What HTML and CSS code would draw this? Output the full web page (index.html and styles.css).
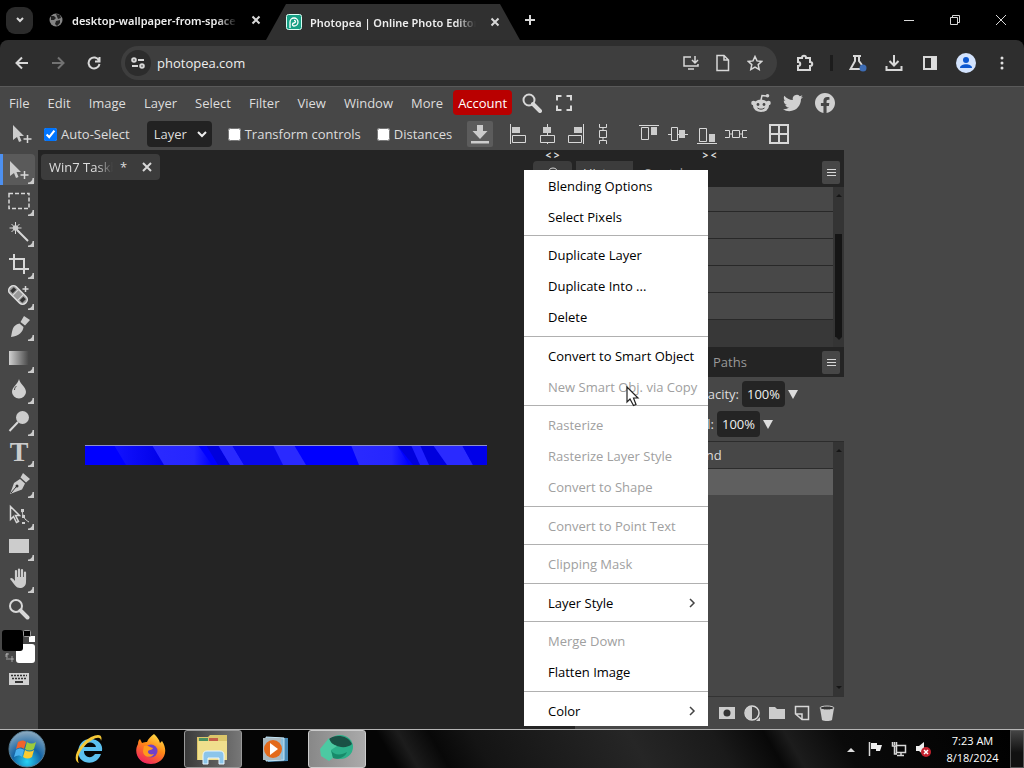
FILE: index.html
```html
<!DOCTYPE html>
<html lang="en">
<head>
<meta charset="UTF-8" />
<meta name="viewport" content="width=device-width, initial-scale=1" />
<title>Photopea | Online Photo Editor</title>
<link rel="stylesheet" href="styles.css">
</head>
<body>

<!-- Browser tabs -->
<header class="tabstrip">
  <button class="tab-search" aria-label="Search tabs"><svg width="10" height="10" viewBox="0 0 10 10"><path d="M2 3l3 3 3-3" class="line bold"/></svg></button>
  <div class="tab">
    <svg class="favicon" width="14" height="14" viewBox="0 0 14 14"><circle cx="7" cy="7" r="6.5" fill="#858585"/><path d="M2 3l3 0 2 2-2 2H2zM7 1l4 1 1 3-3 1zM7 8l4-1 0 3-3 3-2-2z" fill="#222"/></svg>
    <span class="tab-title">desktop-wallpaper-from-space</span>
    <button class="tab-close" aria-label="Close tab"><svg width="10" height="10" viewBox="0 0 10 10"><path d="M1.500 1.500l7 7M8.500 1.500l-7 7" class="line bold"/></svg></button>
  </div>
  <div class="tab active">
    <svg class="favicon" width="16" height="16" viewBox="0 0 16 16"><rect x=".5" y=".5" width="15" height="15" rx="2" fill="#16a085" stroke="#d8fff4"/><path d="M4 14V8a4 4 0 1 1 4 4c-2 0-2-3 0-3 2 0 2-3 0-2.500" fill="none" stroke="#fff" stroke-width="1.300"/></svg>
    <span class="tab-title">Photopea | Online Photo Editor</span>
    <button class="tab-close" aria-label="Close tab"><svg width="10" height="10" viewBox="0 0 10 10"><path d="M1.500 1.500l7 7M8.500 1.500l-7 7" class="line bold"/></svg></button>
  </div>
  <button class="new-tab" aria-label="New tab"><svg width="12" height="12" viewBox="0 0 12 12"><path d="M6 1v10M1 6h10" class="line bold"/></svg></button>
  <div class="window-buttons">
    <button aria-label="Minimize"><svg width="12" height="12" viewBox="0 0 12 12"><path d="M1 6.500h10" class="line"/></svg></button>
    <button aria-label="Restore"><svg width="12" height="12" viewBox="0 0 12 12"><path d="M1.500 3.500h7v7h-7zM3.500 3.500v-2h7v7h-2" class="line"/></svg></button>
    <button aria-label="Close"><svg width="12" height="12" viewBox="0 0 12 12"><path d="M1 1l10 10M11 1L1 11" class="line"/></svg></button>
  </div>
</header>

<!-- Browser toolbar -->
<div class="toolbar">
  <button aria-label="Back"><svg width="14" height="14" viewBox="0 0 14 14"><path d="M13 7H2M7 1.500L1.500 7 7 12.500" class="line bold"/></svg></button>
  <button aria-label="Forward" class="dim"><svg width="14" height="14" viewBox="0 0 14 14"><path d="M1 7h11M7 1.500L12.500 7 7 12.500" class="line bold"/></svg></button>
  <button aria-label="Reload"><svg width="14" height="14" viewBox="0 0 14 14"><path d="M12 4.500A5.500 5.500 0 1 0 12.500 8M12.500 1v4.500H8" class="line bold"/></svg></button>
  <div class="omnibox">
    <button class="site-info" aria-label="Site information"><svg width="14" height="12" viewBox="0 0 14 12"><circle cx="3" cy="3" r="1.800" class="line bold"/><circle cx="11" cy="9" r="1.800" class="line bold"/><path d="M7 3h6M1 9h6" class="line bold"/></svg></button>
    <input type="text" value="photopea.com" aria-label="Address">
    <button aria-label="Install app"><svg width="18" height="16" viewBox="0 0 18 16"><path d="M9 2H2v9h14V9M13 1v6M10 5l3 3 3-3M6 14h6" class="line thick"/></svg></button>
    <button aria-label="Page"><svg width="16" height="18" viewBox="0 0 16 18"><path d="M2 1.500h7l4.500 4.500v10.500H2zM9 1.500V6h4.500" class="line thick"/></svg></button>
    <button aria-label="Bookmark"><svg width="16" height="16" viewBox="0 0 16 16"><path d="M8 1.500l2 4.400 4.800.500-3.600 3.200 1 4.800L8 12l-4.200 2.400 1-4.800L1.200 6.400 6 5.900z" class="line thick"/></svg></button>
  </div>
  <button aria-label="Extensions"><svg width="18" height="18" viewBox="0 0 18 18"><path d="M2 4h4c0-3 4-3 4 0h4v4c3 0 3 4 0 4v4H2v-4c3 0 3-4 0-4z" class="line bold"/></svg></button>
  <span class="bar"></span>
  <button aria-label="Labs"><svg width="18" height="18" viewBox="0 0 18 18"><path d="M4 2h8M6 2v5L1.500 15H12M10 2v5l3 4" class="line bold"/><circle cx="14" cy="14" r="3.500" fill="#3d6cb4"/></svg></button>
  <button aria-label="Downloads"><svg width="18" height="18" viewBox="0 0 18 18"><path d="M9 1v10M4.500 7L9 11.500 13.500 7M1.500 12v4h15v-4" class="line bold"/></svg></button>
  <button aria-label="Side panel"><svg width="16" height="16" viewBox="0 0 16 16"><path d="M2 2h12v12H2z" class="line bold"/><path d="M9 2h5v12H9z" fill="#ddd"/></svg></button>
  <button aria-label="Profile"><svg width="20" height="20" viewBox="0 0 20 20"><circle cx="10" cy="10" r="10" fill="#d3e3fd"/><circle cx="10" cy="7" r="3" fill="#0b57d0"/><path d="M4 15c0-5 12-5 12 0z" fill="#0b57d0"/></svg></button>
  <button aria-label="Menu"><svg width="4" height="16" viewBox="0 0 4 16" fill="#e0e0e0"><circle cx="2" cy="3" r="1.500"/><circle cx="2" cy="8" r="1.500"/><circle cx="2" cy="13" r="1.500"/></svg></button>
</div>

<!-- Editor -->
<div class="app">
  <div class="editor">
    <nav class="menubar">
      <button>File</button>
      <button>Edit</button>
      <button>Image</button>
      <button>Layer</button>
      <button>Select</button>
      <button>Filter</button>
      <button>View</button>
      <button>Window</button>
      <button>More</button>
      <button class="account">Account</button>
      <button class="icon" aria-label="Search"><svg width="20" height="20" viewBox="0 0 20 20"><circle cx="7" cy="7" r="5.500" class="line bold"/><path d="M11 11l7 7" class="line heavy"/></svg></button>
      <button class="icon" aria-label="Fullscreen"><svg width="18" height="18" viewBox="0 0 18 18"><path d="M2 6.500V2h4.500M11.500 2H16v4.500M16 11.500V16h-4.500M6.500 16H2v-4.500" class="line bold"/></svg></button>
      <div class="social">
        <a href="#" aria-label="Reddit"><svg width="20" height="20" viewBox="0 0 20 20"><path d="M10 7l1-4.500 4 .5" class="line thick"/><g fill="#d0d0d0"><circle cx="16.500" cy="2.800" r="1.800"/><circle cx="2.500" cy="10" r="2.300"/><circle cx="17.500" cy="10" r="2.300"/><ellipse cx="10" cy="12.800" rx="8" ry="6.200"/></g><g fill="#474747"><circle cx="7" cy="11.500" r="1.400"/><circle cx="13" cy="11.500" r="1.400"/></g><path d="M6.500 15c2 1.600 5 1.600 7 0" fill="none" stroke="#474747"/></svg></a>
        <a href="#" aria-label="Twitter"><svg width="20" height="20" viewBox="0 0 24 24"><path fill="#d0d0d0" d="M23.950 4.570a10 10 0 0 1-2.820.770 4.960 4.960 0 0 0 2.160-2.720c-.950.550-2 .960-3.130 1.180a4.920 4.920 0 0 0-8.380 4.480C7.690 8.090 4.070 6.130 1.640 3.160a4.820 4.820 0 0 0-.670 2.480c0 1.710.870 3.210 2.190 4.100a4.900 4.900 0 0 1-2.230-.620v.060a4.920 4.920 0 0 0 3.950 4.830 5 5 0 0 1-2.210.080 4.940 4.940 0 0 0 4.600 3.420A9.870 9.870 0 0 1 0 19.540a14 14 0 0 0 7.560 2.210c9.050 0 14-7.500 14-13.980 0-.210 0-.420-.020-.630a9.940 9.940 0 0 0 2.410-2.570z"/></svg></a>
        <a href="#" aria-label="Facebook"><svg width="20" height="20" viewBox="0 0 24 24"><path fill="#d0d0d0" d="M24 12.070C24 5.450 18.630.070 12 .070S0 5.450 0 12.070c0 5.990 4.390 10.950 10.130 11.850v-8.380H7.080v-3.470h3.050V9.430c0-3.010 1.790-4.670 4.530-4.670 1.310 0 2.690.240 2.690.240v2.950h-1.510c-1.490 0-1.960.930-1.960 1.880v2.250h3.330l-.530 3.470h-2.800v8.380C19.610 23.030 24 18.060 24 12.070z"/></svg></a>
      </div>
    </nav>

    <div class="options">
      <svg class="current-tool" width="22" height="22" viewBox="0 0 22 22"><path d="M2 2v15l4-3 2 5 2.500-1-2-5H13z" fill="#ccc"/><path d="M16.500 12v8M12.500 16h8" class="line thick"/></svg>
      <label class="check"><input type="checkbox" checked>Auto-Select</label>
      <select aria-label="Auto-select target"><option>Layer</option><option>Group</option></select>
      <label class="check transform"><input type="checkbox">Transform controls</label>
      <label class="check"><input type="checkbox">Distances</label>
      <button class="download" aria-label="Export"><svg width="20" height="20" viewBox="0 0 20 20"><path d="M7 1h6v6h4.500L10 15 2.500 7H7zM1 17h18v2.500H1z" fill="#ccc"/></svg></button>
      <div class="align">
        <button aria-label="Align left"><svg width="20" height="20" viewBox="0 0 20 20"><path d="M2.500 0v20M4.500 11.500h13v7h-13z" class="line"/><path d="M4 3h8v6H4z" fill="#ccc"/></svg></button>
        <button aria-label="Align center"><svg width="20" height="20" viewBox="0 0 20 20"><path d="M10.500 0v3M10.500 9v2M10.500 18v2M3.500 11.500h14v7h-14z" class="line"/><path d="M6 3h8v6H6z" fill="#ccc"/></svg></button>
        <button aria-label="Align right"><svg width="20" height="20" viewBox="0 0 20 20"><path d="M17.500 0v20M2.500 11.500h13v7h-13z" class="line"/><path d="M8 3h8v6H8z" fill="#ccc"/></svg></button>
        <button aria-label="Distribute vertically" class="narrow"><svg width="12" height="20" viewBox="0 0 12 20"><path d="M2.500 0v3.500h7V0M2.500 6.500h7v7h-7zM2.500 20v-3.500h7V20M6 3v3M6 14v2" class="line"/></svg></button>
      </div>
      <div class="align">
        <button aria-label="Align top"><svg width="20" height="20" viewBox="0 0 20 20"><path d="M0 1.500h20M2.500 3.500h7v12h-7z" class="line"/><path d="M12 3h6v8h-6z" fill="#ccc"/></svg></button>
        <button aria-label="Align middle"><svg width="20" height="20" viewBox="0 0 20 20"><path d="M0 10.500h3M9 10.500h2M17 10.500h3M3.500 3.500h6v13h-6z" class="line"/><path d="M11 6h6v8h-6z" fill="#ccc"/></svg></button>
        <button aria-label="Align bottom"><svg width="20" height="20" viewBox="0 0 20 20"><path d="M0 19.500h20M2.500 4.500h7v13h-7z" class="line"/><path d="M12 10h6v8h-6z" fill="#ccc"/></svg></button>
        <button aria-label="Distribute horizontally"><svg width="22" height="12" viewBox="0 0 22 12"><path d="M0 2.500h4.500v7H0M7.500 2.500h7v7h-7zM22 2.500h-4.500v7H22M5 6h2M15 6h2" class="line"/></svg></button>
      </div>
      <button class="grid-button" aria-label="Grid"><svg width="20" height="20" viewBox="0 0 20 20"><path d="M1 1h18v18H1zM10 1v18M1 10h18" class="line bold"/></svg></button>
    </div>

    <div class="workspace">
      <aside class="toolbox">
        <div class="tools">
          <button class="tool more active" aria-label="Move"><svg width="22" height="22" viewBox="0 0 22 22"><path d="M2 2v15l4-3 2 5 2.500-1-2-5H13z" fill="#ccc"/><path d="M16.500 12v8M12.500 16h8" class="line thick"/></svg></button>
          <button class="tool more" aria-label="Rectangle select"><svg width="22" height="22" viewBox="0 0 22 22"><path d="M1 3.500h20v15H1z" class="line thick" stroke-dasharray="4 2"/></svg></button>
          <button class="tool more" aria-label="Magic wand"><svg width="22" height="22" viewBox="0 0 22 22"><path d="M7.500 1v12M1.500 7h12M3.500 3l8 8M11.500 3l-8 8" class="line"/><circle cx="7.500" cy="7" r="2.800" fill="#ccc"/><path d="M9 9l11 11" class="line bold"/></svg></button>
          <button class="tool more" aria-label="Crop"><svg width="22" height="22" viewBox="0 0 22 22"><path d="M6 1v15h15M1 6h15v15" class="line bold"/></svg></button>
          <button class="tool more" aria-label="Healing brush"><svg width="22" height="22" viewBox="0 0 22 22"><g transform="rotate(45 10 11)"><rect x="-1" y="6.500" width="22" height="9" rx="4" fill="#999" stroke="#ddd" stroke-width="1.500"/><path d="M6.500 6v10M13.500 6v10" stroke="#ddd"/><rect x="1.500" y="8.500" width="3.500" height="5" fill="#333"/><rect x="15" y="8.500" width="3.500" height="5" fill="#333"/></g><path d="M17.500 2v6M14.500 5h6" class="line thick"/></svg></button>
          <button class="tool more" aria-label="Brush"><svg width="22" height="22" viewBox="0 0 22 22"><path d="M16 0l6 4-5 5.500-4.500-3.500zM11.500 7.500l4 3.500C15 16 11 20 3 21c1.500-6 1-12 8.500-13.500z" fill="#ccc"/></svg></button>
          <button class="tool more" aria-label="Gradient"><svg width="22" height="22" viewBox="0 0 22 22"><defs><linearGradient id="fade"><stop offset="0" stop-color="#d0d0d0"/><stop offset="1" stop-color="#454545"/></linearGradient></defs><path d="M1 4h20v14H1z" fill="url(#fade)"/></svg></button>
          <button class="tool more" aria-label="Blur"><svg width="22" height="22" viewBox="0 0 22 22"><path d="M11 1c1 5 7 8 7 13a7 6.500 0 0 1-14 0C4 9 10 6 11 1z" fill="#d0d0d0"/><path d="M6.500 12c0-2 1-3 2-4" fill="none" stroke="#444"/></svg></button>
          <button class="tool more" aria-label="Dodge"><svg width="22" height="22" viewBox="0 0 22 22"><circle cx="14.500" cy="7.500" r="6.500" fill="#ccc"/><path d="M10 12l-8.500 9" class="line bold"/></svg></button>
          <button class="tool more type" aria-label="Type">T</button>
          <button class="tool more" aria-label="Pen"><svg width="22" height="22" viewBox="0 0 22 22"><path d="M15 0l7 6-4 3.500-5.500-5zM12 6l5 4.500-3 6L2 21l4-11z" fill="#ccc"/><circle cx="9" cy="13" r="1.500" fill="#333"/><path d="M3 20l5-6" stroke="#333"/></svg></button>
          <button class="tool more" aria-label="Path select"><svg width="22" height="22" viewBox="0 0 22 22"><path d="M2.500 2.500v13l3-3 3 6 2-1-3-6h4z" class="line thick"/><path d="M14 5c0 7 3 11 7 13" class="line"/><path d="M13 5h3v3h-3zM14 11h3v3h-3zM14 18h3v2h-3z" fill="#ccc"/></svg></button>
          <button class="tool more" aria-label="Rectangle"><svg width="22" height="22" viewBox="0 0 22 22"><path d="M1 4h20v14H1z" fill="#ccc"/></svg></button>
          <button class="tool more" aria-label="Hand"><svg width="22" height="22" viewBox="0 0 22 22"><path d="M8 12V4M11 11V2.500M14 11V3M17 13V5.500" stroke="#ccc" stroke-width="2.200" stroke-linecap="round"/><path d="M7 10h11v5c0 4-3 6-6 6-4 0-5-3-10-9 1-2 3-.5 5 2z" fill="#ccc"/></svg></button>
          <button class="tool" aria-label="Zoom"><svg width="22" height="22" viewBox="0 0 22 22"><circle cx="8" cy="8" r="6" class="line bold"/><path d="M12.500 12.500l7 7" class="line heavy"/></svg></button>
        </div>
        <svg class="colors" width="36" height="36" viewBox="0 0 36 36"><rect x="16" y="15" width="19" height="19" rx="3" fill="#fff"/><rect x="2" y="1" width="21" height="21" rx="3" fill="#000"/><rect x="29" y="7" width="6" height="6" fill="#fff"/><rect x="23.500" y="1.500" width="7" height="6" rx="1" fill="#000" stroke="#999"/><path d="M6 28v-3h3M7 24v7M8 30h6M12 27v6" class="line" opacity=".6"/></svg>
        <button class="keyboard" aria-label="Keyboard"><svg width="20" height="12" viewBox="0 0 20 12"><path d="M0 0h20v12H0z" fill="#d0d0d0"/><path d="M2 2.500h16M3 5.500h15" stroke="#333" stroke-width="1.500" stroke-dasharray="2 1"/><path d="M6 9h8" stroke="#333" stroke-width="2"/></svg></button>
      </aside>

      <main class="document">
        <div class="doc-tabs">
          <div class="doc-tab">
            <span class="doc-name">Win7 Taskbar</span>
            <span class="dirty">*</span>
            <button aria-label="Close document"><svg width="10" height="10" viewBox="0 0 10 10"><path d="M1 1l8 8M9 1L1 9" class="line bold"/></svg></button>
          </div>
        </div>
        <div class="canvas">
          <svg width="402" height="20" viewBox="0 0 402 20">
            <defs>
              <linearGradient id="g1"><stop offset="0" stop-color="#2a2aff"/><stop offset=".7" stop-color="#2626ff"/><stop offset="1" stop-color="#00f"/></linearGradient>
              <linearGradient id="g2"><stop offset="0" stop-color="#1212ff"/><stop offset="1" stop-color="#0000e8"/></linearGradient>
            </defs>
            <path d="M0 0h402v20H0z" fill="#00f"/>
            <path d="M29 0h38l12 20H41z" fill="url(#g2)"/>
            <path d="M67 0h46l14 20H79z" fill="url(#g1)"/>
            <path d="M121 0h12l12 20h-12z" fill="#00d"/>
            <path d="M133 0h14l12 20h-14z" fill="#2a2aff"/>
            <path d="M147 0h41l10 20h-39z" fill="#0808ec"/>
            <path d="M188 0h21l12 20h-23z" fill="#2a2aff"/>
            <path d="M266 0h46l12 20h-50z" fill="url(#g1)"/>
            <path d="M312 0h36l14 20h-34z" fill="#00d"/>
            <path d="M326 0h9l9 20h-9z" fill="#2020ff"/>
            <path d="M348 0h29l11 20h-26z" fill="#2a2aff"/>
            <path d="M377 0h25v20h-14z" fill="#0000e8"/>
            <path d="M0 .5h402" stroke="#8c8cd0"/>
          </svg>
        </div>
      </main>

      <aside class="strip">
        <div class="collapse">&lt; &gt;</div>
        <button aria-label="Properties"><svg width="12" height="12" viewBox="0 0 12 12"><circle cx="6" cy="6" r="5" class="line"/></svg></button>
      </aside>

      <aside class="panels">
        <div class="collapse">&gt; &lt;</div>
        <div class="panel-tabs">
          <button class="current">History</button>
          <button>Swatches</button>
          <button class="panel-menu" aria-label="Panel menu"><svg width="9" height="9" viewBox="0 0 9 9"><path d="M0 1.500h9M0 4.500h9M0 7.500h9" class="line"/></svg></button>
        </div>
        <div class="history">
          <ul>
            <li></li><li></li><li></li><li></li><li></li>
          </ul>
          <div class="scrollbar"><span class="up"></span><span class="thumb"></span><span class="down"></span></div>
        </div>
        <div class="panel-tabs layers-tabs">
          <button>Paths</button>
          <button class="panel-menu" aria-label="Panel menu"><svg width="9" height="9" viewBox="0 0 9 9"><path d="M0 1.500h9M0 4.500h9M0 7.500h9" class="line"/></svg></button>
        </div>
        <div class="layer-option">
          <label for="opacity">Opacity:</label><input id="opacity" type="text" value="100%"><button aria-label="Opacity slider" class="drop"></button>
        </div>
        <div class="layer-option fill">
          <label for="fill">Fill:</label><input id="fill" type="text" value="100%"><button aria-label="Fill slider" class="drop"></button>
        </div>
        <div class="layers">
          <ul>
            <li>Background</li>
            <li class="selected"></li>
          </ul>
          <div class="scrollbar"><span class="up"></span><span class="down"></span></div>
        </div>
        <div class="layer-actions">
          <button aria-label="Add mask"><svg width="16" height="16" viewBox="0 0 16 16"><path d="M0 2h16v12H0z" fill="#ccc"/><circle cx="8" cy="8" r="3.500" fill="#333"/></svg></button>
          <button aria-label="Adjustment layer"><svg width="16" height="16" viewBox="0 0 16 16"><circle cx="8" cy="8" r="7" class="line thick"/><path d="M8 1a7 7 0 0 0 0 14z" fill="#ccc"/><path d="M16 12v4h-4z" fill="#ccc"/></svg></button>
          <button aria-label="New folder"><svg width="16" height="16" viewBox="0 0 16 16"><path d="M0 2h6l2 2h8v10H0z" fill="#ccc"/></svg></button>
          <button aria-label="New layer"><svg width="16" height="16" viewBox="0 0 16 16"><path d="M1.500 9V1.500h13v13H8zM1.500 9H8v5.500" class="line thick"/></svg></button>
          <button aria-label="Delete layer"><svg width="16" height="16" viewBox="0 0 16 16"><path d="M1 3l2 12c2 1.300 8 1.300 10 0l2-12z" fill="#ccc"/><ellipse cx="8" cy="3" rx="7" ry="2" fill="#333" stroke="#ccc"/></svg></button>
        </div>
      </aside>
    </div>
  </div>
</div>

<!-- Layer context menu -->
<div class="context-menu">
  <button>Blending Options</button>
  <button>Select Pixels</button>
  <hr>
  <button>Duplicate Layer</button>
  <button>Duplicate Into ...</button>
  <button>Delete</button>
  <hr>
  <button>Convert to Smart Object</button>
  <button disabled>New Smart Obj. via Copy</button>
  <hr>
  <button disabled>Rasterize</button>
  <button disabled>Rasterize Layer Style</button>
  <button disabled>Convert to Shape</button>
  <hr>
  <button disabled>Convert to Point Text</button>
  <hr>
  <button disabled>Clipping Mask</button>
  <hr>
  <button>Layer Style<svg width="8" height="10" viewBox="0 0 8 10"><path d="M2 1l4 4-4 4" class="arrow"/></svg></button>
  <hr>
  <button disabled>Merge Down</button>
  <button>Flatten Image</button>
  <hr>
  <button>Color<svg width="8" height="10" viewBox="0 0 8 10"><path d="M2 1l4 4-4 4" class="arrow"/></svg></button>
</div>
<svg class="pointer" width="14" height="21" viewBox="0 0 14 21"><path d="M1 1v15l3-3 3.500 6.500 2.500-1L7.500 12H12z" fill="#fff" stroke="#222" stroke-width="1.200"/></svg>

<!-- Windows taskbar -->
<footer class="taskbar">
  <button aria-label="Start"><svg width="38" height="38" viewBox="0 0 38 38"><defs><radialGradient id="orb" cx=".5" cy=".85" r=".9"><stop offset="0" stop-color="#27d3f5"/><stop offset=".45" stop-color="#1464a5"/><stop offset="1" stop-color="#9fb5c4"/></radialGradient></defs><circle cx="19" cy="19" r="18" fill="url(#orb)" stroke="#577d94"/><path d="M10 12c3-2 6-2 8 0l-2 7c-2-2-5-2-8 0z" fill="#f0632c"/><path d="M19 12c3 2 6 2 9 0l-2 7c-3 2-6 2-9 0z" fill="#9ccb3b"/><path d="M8 20c3-2 5-2 8 0l-2 7c-2-2-5-2-8 0z" fill="#4ab0ee"/><path d="M17 20c3 2 6 2 9 0l-2 7c-3 2-6 2-9 0z" fill="#fccb2f"/></svg></button>
  <button aria-label="Internet Explorer"><svg width="32" height="32" viewBox="0 0 32 32"><path d="M29 18H11c0 7 8 8 11 3h6c-3 8-10 10-16 8C1 25 4 6 17 6c9 0 13 6 12 12zM11 14h12c-1-6-11-6-12 0z" fill="#5cc0ee"/><path d="M6 30C-3 26 8 9 18 4c8-4 12-2 10 4 0-4-4-4-9-1C10 12 2 24 6 30z" fill="#f5c837"/></svg></button>
  <button aria-label="Firefox"><svg width="32" height="32" viewBox="0 0 32 32"><defs><linearGradient id="fox" x1=".8" y1="0" x2=".3" y2="1"><stop offset="0" stop-color="#ffe64d"/><stop offset=".45" stop-color="#ff8a16"/><stop offset="1" stop-color="#f02060"/></linearGradient></defs><path d="M19 1c3 3 5 5 6 9l2-2c8 12 0 23-11 23C4 31-2 20 3 11c0-3 1-4 2-5l2 4c2-1 4-1 5-1 1-3 4-6 7-8z" fill="url(#fox)"/><circle cx="16" cy="18" r="6.500" fill="#7141c8"/><path d="M9 13c5-1 6 2 9 2-1 3-5 1-5 4 0 2 3 3 6 2-3 5-11 3-11-3z" fill="#ff9a1c"/></svg></button>
  <button class="running" aria-label="Explorer"><svg width="36" height="32" viewBox="0 0 36 32"><path d="M2 4h11l2-2h17v25H2z" fill="#dcc66a"/><path d="M4 5h9v3H4z" fill="#4a8f60"/><path d="M14 5h9v3h-9z" fill="#c45e48"/><path d="M3 8h29v19H3z" fill="#f0df8d"/><path d="M8 31v-9c0-3 2-4 4-4h13c2 0 4 1 4 4v9h-5v-6H13v6z" fill="#8cc5ea" stroke="#e8f6ff"/></svg></button>
  <button aria-label="Media Player"><svg width="30" height="28" viewBox="0 0 30 28"><path d="M8 2l20 1v23L8 27z" fill="#4688b5"/><path d="M6 2l18 1v22L6 26z" fill="#8bbfdd" stroke="#c6e3f2"/><path d="M3 3h18v22H3z" fill="#aab9c1"/><circle cx="13" cy="14" r="9" fill="#e36a1b"/><path d="M10 8l8 6-8 6z" fill="#fff"/></svg></button>
  <button class="running current" aria-label="Photopea"><svg width="36" height="30" viewBox="0 0 36 30"><ellipse cx="21" cy="13" rx="13" ry="12" fill="#2cb08a"/><path d="M9 6c5-6 20-6 24 4-4 4-12 4-17 1-3-1-5-2-7-5z" fill="#1a5145"/><path d="M1 15L10 4c1 4 4 7 8 8l-6 4 2 8-4 3-8-5z" fill="#4cc9a2"/><path d="M12 16c2 5 10 6 16 2-2 6-10 8-14 6z" fill="#178a6a"/></svg></button>
  <div class="tray">
    <button aria-label="Hidden icons"><svg width="8" height="5" viewBox="0 0 8 5"><path d="M0 5l4-4 4 4z" fill="#ddd"/></svg></button>
    <button aria-label="Action center"><svg width="16" height="16" viewBox="0 0 16 16"><path d="M2.500 1v14" class="line thick"/><path d="M4 2h6v2h5l-2 6H9V8H4z" fill="#eee"/></svg></button>
    <button aria-label="Network"><svg width="16" height="16" viewBox="0 0 16 16"><path d="M5.500 4.500h9v7h-9zM6 14.500h7M10 12v2M3.500 5v8H6M1.500 1v4h4V1M3.500 1v3" class="line thick"/></svg></button>
    <button aria-label="Volume"><svg width="16" height="16" viewBox="0 0 16 16"><path d="M1 5h3l5-4v13l-5-4H1z" fill="#eee"/><circle cx="11" cy="11" r="5" fill="#c4212e"/><path d="M9 9l4 4M13 9l-4 4" stroke="#fff" stroke-width="1.500"/></svg></button>
  </div>
  <div class="clock"><span>7:23 AM</span><span>8/18/2024</span></div>
  <button class="show-desktop" aria-label="Show desktop"></button>
</footer>

</body>
</html>
```
FILE: styles.css
```css
* { box-sizing: border-box; }
html, body {
  margin: 0; padding: 0; height: 100%;
  font-family: "Open Sans", "Noto Sans", sans-serif; font-size: 13px; color: #ddd;
  background: #000;
}
body {
  display: flex; flex-direction: column; overflow: hidden; position: relative;
}
button, input, select { font: inherit; color: inherit; }
button {
  background: none; border: none; padding: 0; margin: 0;
  display: flex; align-items: center; justify-content: center; flex-shrink: 0;
}
svg { display: block; flex-shrink: 0; }
ul { list-style: none; margin: 0; padding: 0; }

/* icon strokes */
.line { fill: none; stroke: #d8d8d8; stroke-width: 1; }
.thick { stroke-width: 1.5; }
.bold { stroke-width: 2; }
.heavy { stroke-width: 4; stroke-linecap: round; }

/* browser tabs */
.tabstrip {
  display: flex; align-items: center; height: 40px; padding-left: 6px; flex-shrink: 0;
}
.tab-search {
  width: 27px; height: 27px; border-radius: 9px; background: #2b2b2b;
}
.tab {
  display: flex; align-items: center; width: 233px; padding-left: 16px;
}
.tab-title {
  width: 166px; margin-left: 9px; overflow: hidden; white-space: nowrap;
  font-family: "Noto Sans", "Open Sans", sans-serif; font-size: 11px; font-weight: 600; color: #eee;
  mask-image: linear-gradient(to right, #000 88%, transparent);
}
.tab-close { width: 20px; height: 20px; margin-left: 9px; }
.tab.active {
  width: 254px; height: 36px; margin-top: 4px; padding-left: 20px;
  background: #303030; clip-path: polygon(20px 0, 234px 0, 254px 100%, 0 100%);
}
.tab.active .tab-title { margin-left: 8px; }
.new-tab { width: 20px; height: 28px; }
.window-buttons { display: flex; margin-left: auto; }
.window-buttons button { width: 46px; height: 40px; }

/* browser toolbar */
.toolbar {
  display: flex; align-items: center; height: 46px; flex-shrink: 0; padding: 0 4px;
  background: #2e2e2e; border-radius: 8px 8px 0 0;
}
.toolbar button { width: 36px; height: 32px; }
.toolbar .dim { opacity: 0.4; }
.omnibox {
  display: flex; align-items: center; flex: 1; height: 34px; min-width: 0;
  margin: 0 10px 0 9px; padding: 0 6px 0 4px; border-radius: 17px; background: #3e3e3e;
}
.omnibox button { width: 32px; }
.omnibox .site-info { width: 26px; height: 26px; border-radius: 13px; background: #2c2c2c; }
.omnibox input {
  flex: 1; min-width: 0; background: none; border: none; padding: 0 6px; outline: none;
  font-size: 13px; color: #eee;
}
.bar { width: 3px; height: 16px; margin: 0 7px; background: #1c1c1c; }

/* editor */
.app {
  display: flex; flex: 1; min-height: 0; padding-right: 180px;
  background: #474747; border-top: 1px solid #5a5a5a;
}
.editor { display: flex; flex-direction: column; flex: 1; min-width: 0; }
.menubar { display: flex; align-items: center; height: 31px; flex-shrink: 0; }
.menubar button { height: 25px; padding: 0 9px; }
.menubar .account {
  margin: 0 4px 0 1px; padding: 0 5px; background: #b90000; color: #fff; border-radius: 4px;
}
.menubar .icon { width: 32px; padding: 0; }
.social { display: flex; gap: 12px; margin-left: auto; padding-right: 9px; }

.options { display: flex; align-items: center; height: 32px; flex-shrink: 0; padding-left: 11px; }
.check { display: flex; align-items: center; gap: 4px; margin-left: 11px; }
.check input { width: 13px; height: 13px; margin: 0; }
.check + .check { margin-left: 16px; }
.options select {
  appearance: none; width: 65px; height: 26px; margin: 0 5px 0 17px; padding: 0 7px;
  border: none; border-radius: 4px;
  background: #222 url("data:image/svg+xml,%3Csvg xmlns='http://www.w3.org/2000/svg' width='10' height='8'%3E%3Cpath d='M1 2l4 4 4-4' fill='none' stroke='%23eee' stroke-width='2'/%3E%3C/svg%3E") no-repeat right 5px center;
}
.download { width: 26px; height: 26px; margin: 0 10px 0 15px; background: #5c5c5c; border-radius: 2px; }
.align { display: flex; margin-right: 18px; }
.align + .align { margin-right: 14px; }
.align button { width: 29px; height: 26px; }
.align .narrow { width: 26px; }
.grid-button { width: 30px; height: 26px; }

.workspace { display: flex; flex: 1; min-height: 0; background: #242424; }
.toolbox { width: 38px; padding-top: 4px; background: #474747; flex-shrink: 0; }
.tools { display: grid; grid-auto-rows: 1fr; height: 471px; }
.tool { position: relative; width: 35px; padding-left: 3px; }
.tool.active { background: #5a5a5a; border-left: 3px solid #4d90f0; padding-left: 0; border-radius: 0 4px 4px 0; }
.tool.more::after {
  content: ""; position: absolute; right: 1px; bottom: 1px; width: 6px; height: 6px;
  background: radial-gradient(circle at 0 0, transparent 4px, #ccc 5px);
}
.type { font-family: "Liberation Serif", serif; font-weight: bold; font-size: 28px; color: #ccc; line-height: 20px; }
.colors { margin-top: 4px; }
.keyboard { width: 38px; height: 26px; margin-top: 1px; }

.document { display: flex; flex-direction: column; flex: 1; min-width: 0; padding-left: 3px; }
.doc-tabs { padding-top: 4px; }
.doc-tab {
  display: flex; align-items: center; width: 119px; height: 26px; padding: 0 8px;
  background: #3c3c3c; border-radius: 4px;
}
.doc-name {
  width: 64px; overflow: hidden; white-space: nowrap;
  mask-image: linear-gradient(to right, #000 75%, transparent);
}
.dirty { margin-left: 7px; }
.doc-tab button { margin-left: auto; }
.canvas { display: flex; align-items: center; justify-content: center; flex: 1; }

/* right panels */
.strip { width: 42px; margin-left: 2px; flex-shrink: 0; }
.strip button { width: 39px; height: 23px; background: #3c3c3c; border-radius: 4px 4px 0 0; }
.collapse { height: 11px; line-height: 10px; font-size: 10px; font-weight: bold; text-align: center; }
.strip .collapse { padding-right: 3px; }
.panels { display: flex; flex-direction: column; width: 269px; flex-shrink: 0; background: #474747; }
.panels .collapse { background: #242424; }
.panel-tabs { display: flex; align-items: flex-start; height: 26px; background: #242424; padding: 0 4px 0 1px; color: #999; flex-shrink: 0; }
.panel-tabs button { height: 23px; padding: 0 7px; }
.panel-tabs .current { background: #3c3c3c; color: #ddd; margin-right: 4px; }
.panel-tabs .panel-menu { width: 18px; margin-left: auto; padding: 0; background: #474747; border-radius: 2px; }
.history { display: flex; height: 160px; flex-shrink: 0; background: #383838; }
.history ul, .layers ul { flex: 1; }
.history li { height: 27px; border-bottom: 1px solid #282828; background: #484848; }
.history li:first-child { height: 25px; }
.scrollbar {
  display: flex; flex-direction: column; align-items: center; width: 11px; padding: 4px 0; background: #343434;
}
.scrollbar .up, .scrollbar .down { border: 3px solid transparent; }
.scrollbar .up { border-bottom-color: #161616; }
.scrollbar .down { border-top-color: #161616; margin-top: auto; }
.scrollbar .thumb { width: 7px; height: 103px; margin-top: auto; background: #151515; }
.scrollbar .thumb + .down { margin-top: 0; }
.layers-tabs { height: 30px; padding-left: 131px; align-items: center; }
.layer-option { display: flex; align-items: center; justify-content: flex-end; height: 30px; gap: 3px; padding-right: 46px; flex-shrink: 0; }
.layers-tabs + .layer-option { margin-top: 2px; }
.layer-option.fill { padding-right: 71px; }
.layer-option input { width: 43px; height: 26px; border: none; border-radius: 4px; background: #242424; text-align: center; padding: 0; color: #eee; }
.drop { width: 10px; border: 5px solid transparent; border-top: 9px solid #ddd; border-bottom: 0; }
.layers { display: flex; flex: 1; margin-top: 2px; border-top: 1px solid #2c2c2c; border-bottom: 1px solid #333; }
.layers li { height: 27px; line-height: 26px; padding-left: 74px; border-bottom: 1px solid #2c2c2c; }
.layers .selected { height: 26px; background: #5f5f5f; border: none; }
.layer-actions { display: flex; align-items: center; justify-content: flex-end; gap: 9px; height: 32px; padding-right: 9px; flex-shrink: 0; }

/* context menu sits over the panels */
.context-menu {
  position: absolute; left: 524px; top: 170px; bottom: 42px; width: 184px;
  display: flex; flex-direction: column; background: #fff; color: #000;
}
.context-menu button { height: 31px; padding: 0 12px 0 24px; justify-content: space-between; white-space: nowrap; color: #000; }
.context-menu button:disabled { color: #a0a0a0; }
.context-menu hr { flex: 1; width: 100%; margin: 0; border: none; background: linear-gradient(#b0b0b0, #b0b0b0) no-repeat center / 100% 1px; }
.arrow { fill: none; stroke: #444; stroke-width: 1.5; }
.pointer { position: absolute; left: 626px; top: 386px; }

/* taskbar */
.taskbar {
  display: flex; align-items: center; height: 39px; flex-shrink: 0; border-top: 1px solid #b5b5b5;
  background: linear-gradient(60deg, #050505 38%, #1c1c1c 40%, #080808 43%, #141414 47%, #262626 62%, #1a1a1a 70%, #080808 75%, #1c1c1c 77%, #0a0a0a 82%, #000 100%);
}
.taskbar button { width: 62px; height: 38px; }
.taskbar > button:first-child { width: 54px; margin-right: 4px; }
.taskbar .running {
  width: 58px; margin: 0 2px; border: 1px solid #999; border-radius: 3px;
  background: linear-gradient(to right, #3a3a3a, #777);
}
.taskbar .current { background: linear-gradient(to right, #888, #aaa); border-color: #ccc; }
.tray { display: flex; align-items: center; margin-left: auto; }
.taskbar .tray button { width: 24px; }
.clock { display: flex; flex-direction: column; align-items: center; width: 75px; font-size: 11px; line-height: 17px; color: #fff; }
.taskbar .show-desktop { width: 14px; border: 1px solid #555; background: linear-gradient(#444, #111 60%); }
```
